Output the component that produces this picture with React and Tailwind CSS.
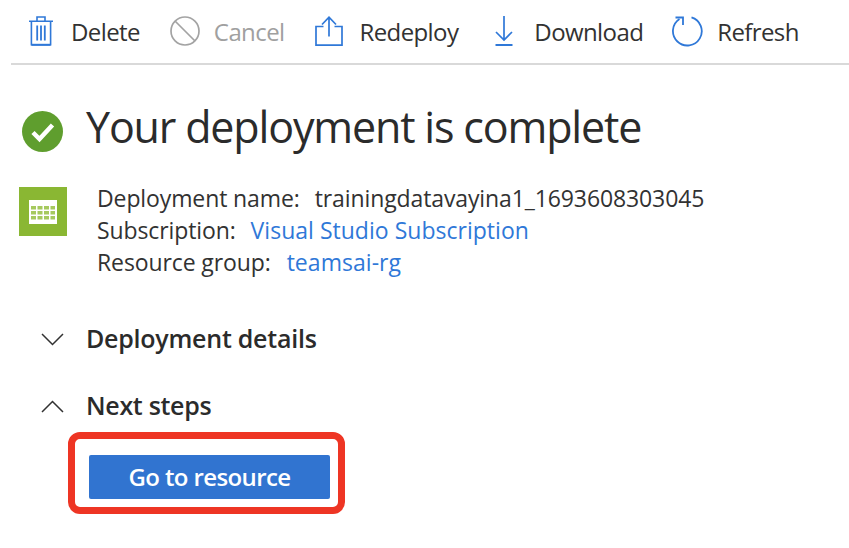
const F = { fontFamily: '"Open Sans", "Noto Sans", sans-serif' };
const B = "#2f78d8";

function ToolItem({ icon, label, color = "text-[#323232]", iconW, gap, ml }) {
  return (
    <div className={`flex items-center ${ml}`}>
      <div className={`flex justify-center ${iconW}`}>{icon}</div>
      <span className={`${gap} text-[24px] leading-[32px] tracking-[-0.6px] pt-[2px] ${color}`}>{label}</span>
    </div>
  );
}

const Trash = (
  <svg width="24" height="30" viewBox="0 0 24 30" fill="none" stroke={B} strokeWidth="1.6">
    <path d="M0 5.200h24M8 5V1h8v4M2.400 5.200V28.800h19.200V5.200" />
    <path d="M8.200 9.500V24.500M12 9.500V24.500M15.800 9.500V24.500" strokeWidth="1.800" />
    <path d="M2.400 28.800h19.200" strokeWidth="2" />
  </svg>
);
const Cancel = (
  <svg width="30" height="30" viewBox="0 0 30 30" fill="none" stroke="#a3a3a3" strokeWidth="1.7">
    <circle cx="15" cy="15" r="14" />
    <path d="M5 5l20 20" />
  </svg>
);
const Redeploy = (
  <svg width="28" height="30" viewBox="0 0 28 30" fill="none" stroke={B} strokeWidth="1.7">
    <path d="M8.500 10.500H1v18.600h26V10.500h-7.500" />
    <path d="M14 20.500V1M7 8.500L14 1.200l7 7.300" />
  </svg>
);
const Download = (
  <svg width="18" height="30" viewBox="0 0 18 30" fill="none" stroke={B} strokeWidth="1.7">
    <path d="M9 0V24M1 16l8 8 8-8" />
    <path d="M0.500 29h17" strokeWidth="2" />
  </svg>
);
const Refresh = (
  <svg width="32" height="32" viewBox="0 0 32 32" fill="none" stroke={B} strokeWidth="1.800">
    <path d="M20.500 2.300A14.400 14.400 0 1 1 8.500 4" />
    <path d="M4.500 2.500h7.500V10" />
  </svg>
);

export default function App() {
  return (
    <div className="w-[849px] h-[548px] bg-white overflow-hidden" style={F}>
      <div className="ml-[11px] h-[65px] border-b-2 border-[#d9d9d9] flex items-center pb-[2px]">
        <ToolItem ml="ml-[18px]" iconW="w-[24px]" gap="ml-[18px]" icon={Trash} label="Delete" />
        <ToolItem ml="ml-[29px]" iconW="w-[32px]" gap="ml-[13px]" icon={Cancel} label="Cancel" color="text-[#a0a0a0]" />
        <ToolItem ml="ml-[30px]" iconW="w-[30px]" gap="ml-[15px]" icon={Redeploy} label="Redeploy" />
        <ToolItem ml="ml-[36px]" iconW="w-[20px]" gap="ml-[20px]" icon={Download} label="Download" />
        <ToolItem ml="ml-[28px]" iconW="w-[32px]" gap="ml-[14px]" icon={Refresh} label="Refresh" />
      </div>

      <div className="flex items-center mt-[34px] ml-[22px] h-[56px]">
        <svg width="41" height="41" viewBox="0 0 41 41" className="mt-[8px]">
          <circle cx="20.500" cy="20.500" r="20.500" fill="#5f9e2e" />
          <path d="M11 21.500l6.500 6.500L30.500 14" fill="none" stroke="#fff" strokeWidth="4.500" />
        </svg>
        <h1 className="ml-[23px] text-[43px] leading-[56px] tracking-[-1.16px] text-[#2b2b2b] font-normal whitespace-nowrap">
          Your deployment is complete
        </h1>
      </div>

      <div className="flex mt-[27px] ml-[19px]">
        <div className="w-[48px] h-[49px] mt-[5px] bg-[#8ab733] flex items-center justify-center">
          <svg width="28" height="24" viewBox="0 0 28 24">
            <rect width="28" height="24" fill="#fff" />
            <g fill="#a6c95e">
              <rect x="2" y="6" width="5" height="3.500" /><rect x="8.500" y="6" width="5" height="3.500" /><rect x="15" y="6" width="5" height="3.500" /><rect x="21.500" y="6" width="4.500" height="3.500" />
              <rect x="2" y="11" width="5" height="3.500" /><rect x="8.500" y="11" width="5" height="3.500" /><rect x="15" y="11" width="5" height="3.500" /><rect x="21.500" y="11" width="4.500" height="3.500" />
              <rect x="2" y="16" width="5" height="3.500" /><rect x="8.500" y="16" width="5" height="3.500" /><rect x="15" y="16" width="5" height="3.500" /><rect x="21.500" y="16" width="4.500" height="3.500" />
            </g>
          </svg>
        </div>
        <div className="ml-[30px] text-[23px] leading-[32px] tracking-[-0.11px] text-[#323232]">
          <div className="flex"><span>Deployment name:</span><span className="ml-[15px]">trainingdatavayina1_1693608303045</span></div>
          <div className="flex"><span>Subscription:</span><span className="ml-[15px] text-[#2f78d8] tracking-[0.02px]">Visual Studio Subscription</span></div>
          <div className="flex"><span>Resource group:</span><span className="ml-[16px] text-[#2f78d8] tracking-[0.04px]">teamsai-rg</span></div>
        </div>
      </div>

      <div className="flex items-center mt-[44px] ml-[41px] h-[34px]">
        <svg width="23" height="13" viewBox="0 0 23 13" fill="none" stroke="#323232" strokeWidth="1.500"><path d="M1 1l10.500 10.500L22 1" /></svg>
        <span className="ml-[22px] text-[25px] font-semibold tracking-[-0.24px] text-[#2b2b2b]">Deployment details</span>
      </div>
      <div className="flex items-center mt-[33px] ml-[41px] h-[34px]">
        <svg width="23" height="13" viewBox="0 0 23 13" fill="none" stroke="#323232" strokeWidth="1.500"><path d="M1 12L11.500 1.500 22 12" /></svg>
        <span className="ml-[22px] text-[25px] font-semibold tracking-[-0.3px] text-[#2b2b2b]">Next steps</span>
      </div>

      <div className="mt-[9px] ml-[68px] w-[277px] h-[82px] border-[7px] border-[#ee3524] rounded-[12px] pt-[16px] pl-[14px] bg-white">
        <button className="block w-[241px] h-[44px] bg-[#3174d0] rounded-[2px] text-white text-[24px] font-semibold tracking-[-0.6px]" style={F}>
          Go to resource
        </button>
      </div>
    </div>
  );
}
